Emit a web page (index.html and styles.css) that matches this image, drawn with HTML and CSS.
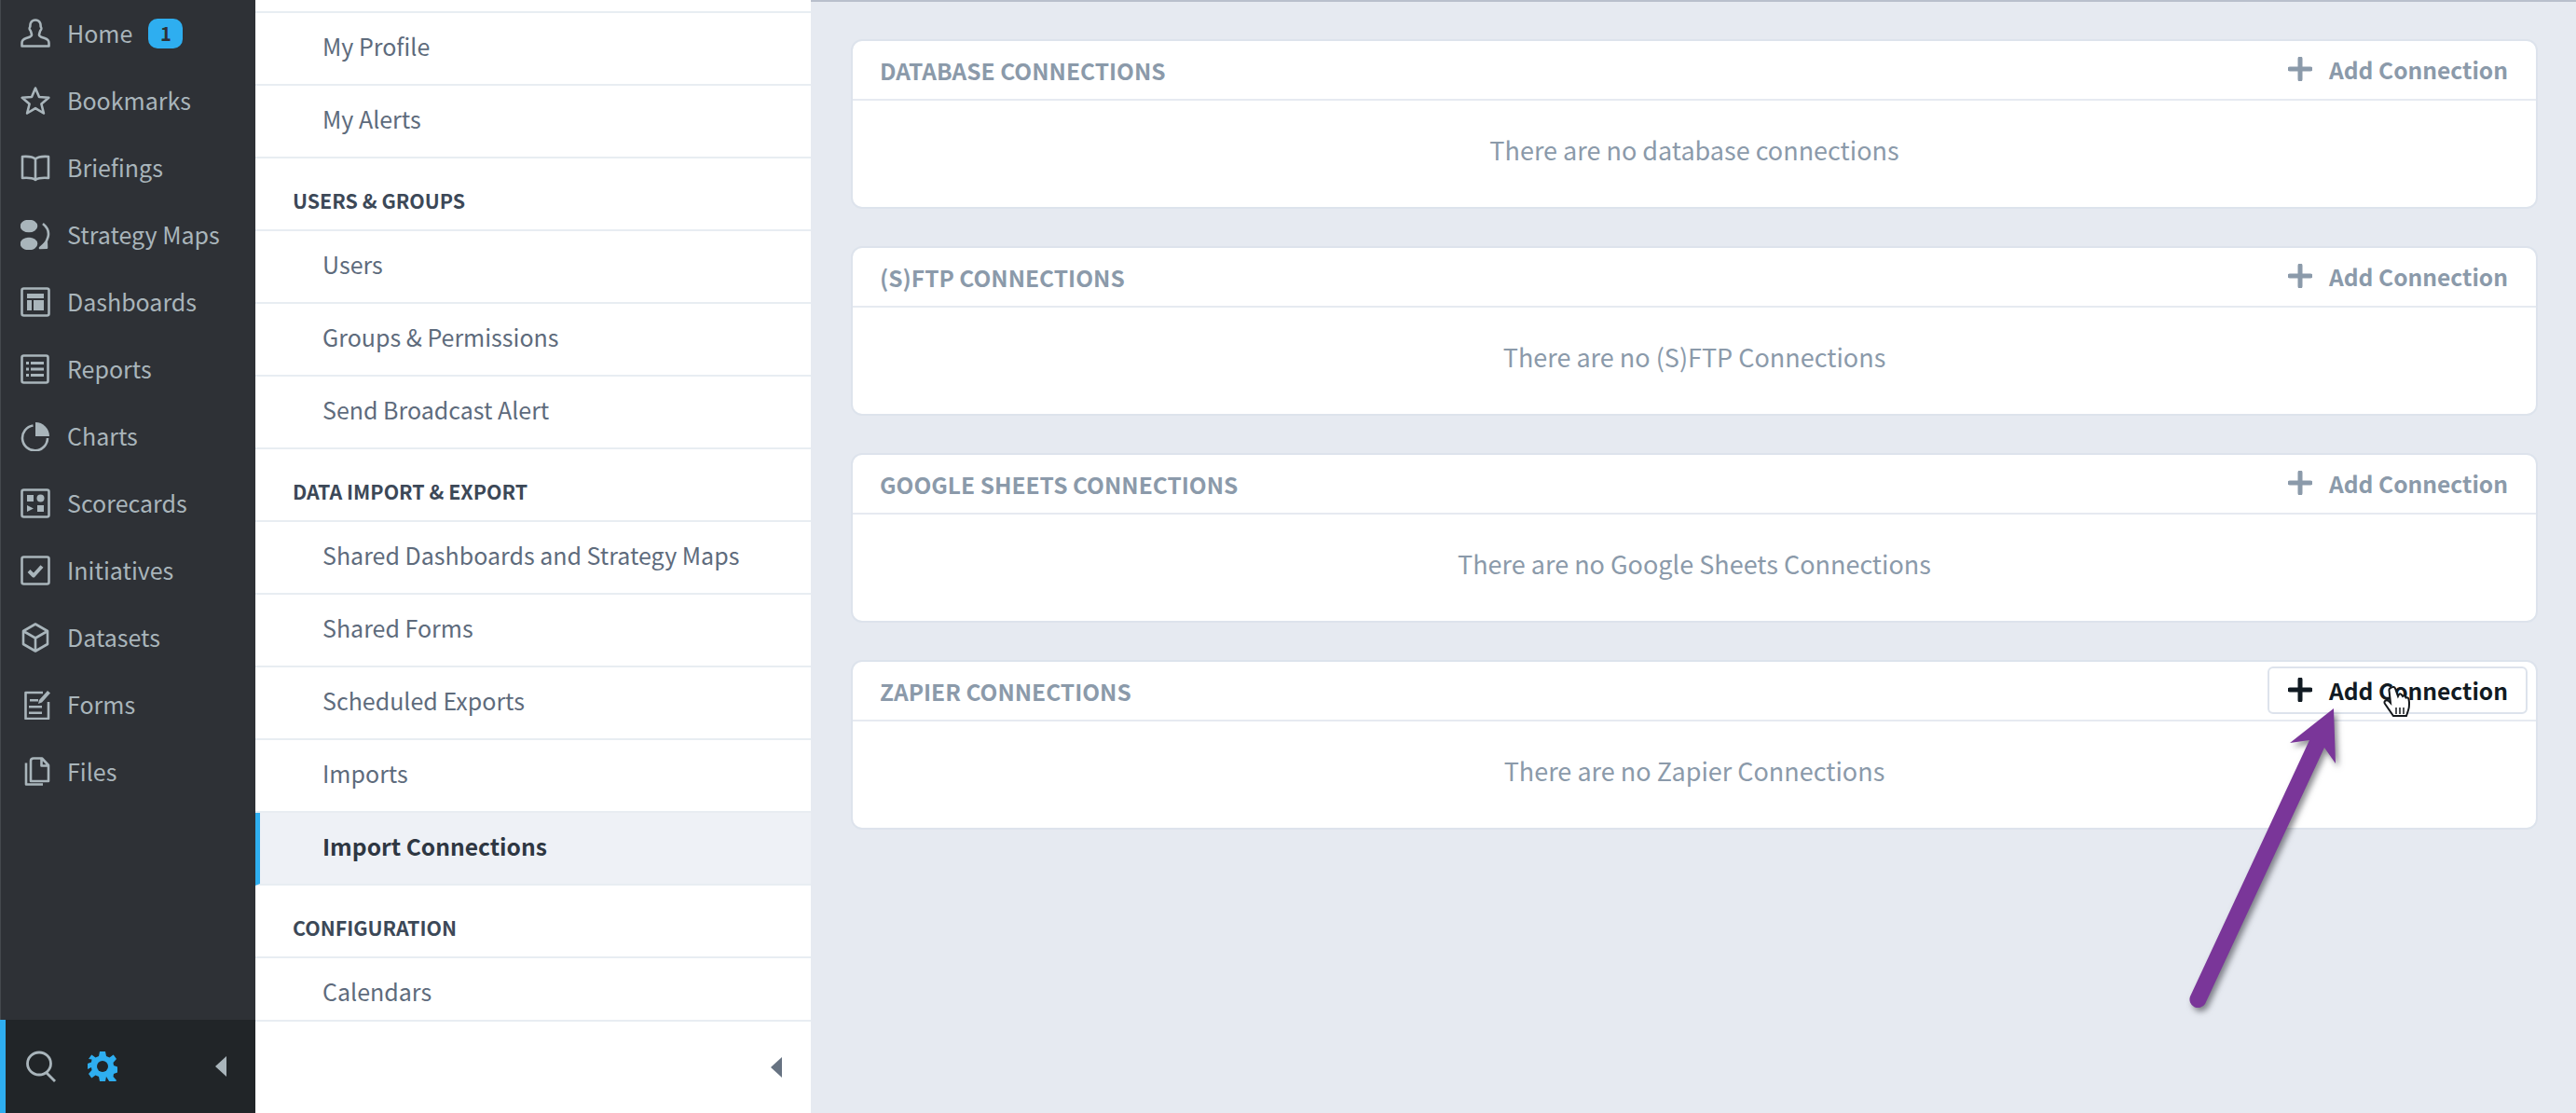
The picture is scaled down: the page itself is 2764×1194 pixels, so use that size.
FILE: index.html
```html
<!DOCTYPE html>
<html lang="en">
<head>
<meta charset="utf-8">
<title>Import Connections</title>
<link rel="stylesheet" href="styles.css">
</head>
<body>
<div class="app">
  <aside class="rail">
    <nav class="rail-nav">
      <a class="rail-item"><svg class="ri" viewBox="0 0 32 32"><path d="M11 4.500c1-2 3-3 5-3s4 1 5 3c.8 1.600.5 3 .7 4 .2 1 .9 1 .6 2.500-.3 1.300-1 1.500-1.300 2.500-.4 1.500-1 3-1 4 0 2 3 2.500 6 3.500 3 1 4.500 2.500 4.500 5v3.500H1.500V26c0-2.500 1.500-4 4.500-5s6-1.500 6-3.500c0-1-.6-2.500-1-4-.3-1-1-1.200-1.300-2.500-.3-1.500.4-1.500.6-2.500.2-1-.1-2.400.7-4z"/></svg><span>Home</span><b class="badge">1</b></a>
      <a class="rail-item"><svg class="ri" viewBox="0 0 32 32"><path d="M16 2.500l4 9.500 10.300.8-7.900 6.700 2.500 10-8.900-5.400-8.900 5.400 2.500-10-7.900-6.700L12 12z"/></svg><span>Bookmarks</span></a>
      <a class="rail-item"><svg class="ri" viewBox="0 0 32 32"><path d="M16 6.500C13 4 8 3.500 2 4v23c6-.5 11 0 14 2 3-2 8-2.500 14-2V4c-6-.5-11 0-14 2.500zM16 6.500V29"/></svg><span>Briefings</span></a>
      <a class="rail-item"><svg class="ri" viewBox="0 0 32 32"><ellipse class="fill" cx="9" cy="6.500" rx="8" ry="5.500"/><ellipse class="fill" cx="9" cy="25.500" rx="8" ry="5.500"/><path d="M24 4c5 4 6 8 6 11 0 4-2 8-5 12"/><path class="fill" d="M21 30l7-.2-.2-6z"/></svg><span>Strategy Maps</span></a>
      <a class="rail-item"><svg class="ri" viewBox="0 0 32 32"><rect x="1.500" y="1.500" width="29" height="29" rx="2"/><path class="fill nost" d="M7 7h18v5H7zM7 14h5v11H7zM14 14h11v11H14z"/></svg><span>Dashboards</span></a>
      <a class="rail-item"><svg class="ri" viewBox="0 0 32 32"><rect x="1.500" y="1.500" width="28" height="29" rx="2"/><path class="fill nost" d="M6 8h3v3H6zM11 8h14v3H11zM6 14.500h3v3H6zM11 14.500h14v3H11zM6 21h3v3H6zM11 21h14v3H11z"/></svg><span>Reports</span></a>
      <a class="rail-item"><svg class="ri" viewBox="0 0 32 32"><path d="M13.500 4.500A13.500 13.500 0 1 0 29 18"/><path class="fill nost" d="M16 1a15 15 0 0 1 15 15H16z"/></svg><span>Charts</span></a>
      <a class="rail-item"><svg class="ri" viewBox="0 0 32 32"><rect x="1.500" y="1.500" width="29" height="29" rx="2"/><path class="fill nost" d="M7 7h7v7H7zM18 18h7v7h-7zM7 18l7 3.500L7 25z"/><circle class="fill nost" cx="21.500" cy="10.500" r="4"/></svg><span>Scorecards</span></a>
      <a class="rail-item"><svg class="ri" viewBox="0 0 32 32"><rect x="1.500" y="1.500" width="29" height="29" rx="2"/><path class="thick" d="M9 16.500l5 5 9-10"/></svg><span>Initiatives</span></a>
      <a class="rail-item"><svg class="ri" viewBox="0 0 32 32"><path d="M16 1.500l13 7.500v14l-13 7.500L3 23V9zM3 9l13 7.500L29 9M16 16.500v14"/></svg><span>Datasets</span></a>
      <a class="rail-item"><svg class="ri" viewBox="0 0 32 32"><path d="M24 3H5.500v28H30V13"/><path class="fill nost" d="M29 1l3 2.500-9 10-4 1.500 1-4zM10 10h9v2.500h-9zM9 17h14v2.500H9zM9 23.500h14V26H9z"/></svg><span>Forms</span></a>
      <a class="rail-item"><svg class="ri" viewBox="0 0 32 32"><path d="M14 1.500h9l7 7.500v17H11V4.500c0-2 1-3 3-3zM22.500 2v7.500H30"/><path d="M6 6.500v23h18"/></svg><span>Files</span></a>
    </nav>
    <div class="rail-foot">
      <svg class="foot-search" viewBox="0 0 32 32"><ellipse cx="14" cy="13" rx="12.500" ry="12"/><path d="M22 23l9 9"/></svg>
      <svg class="foot-gear" viewBox="0 0 32 32"><path d="M13 0h6l1 5 3.500 1.500 4.200-3 3.300 4.500-3.500 4 .5 3 4 1.500v6l-4 1.500-.5 3 3.500 4-3.300 4.500-4.200-3L20 27l-1 5h-6l-1-5-3.500-1.500-4.200 3L1 24l3.500-4-.5-3L0 19v-6l4-1.500.5-3L1 8l3.300-4.500 4.200 3L12 5z"/><circle cx="16" cy="16" r="6" class="hole"/></svg>
      <i class="caret caret-rail"></i>
    </div>
  </aside>

  <aside class="menu">
    <div class="menu-scroll">
      <a class="m-row">My Profile</a>
      <a class="m-row">My Alerts</a>
      <h4 class="m-head">USERS &amp; GROUPS</h4>
      <a class="m-row">Users</a>
      <a class="m-row">Groups &amp; Permissions</a>
      <a class="m-row">Send Broadcast Alert</a>
      <h4 class="m-head">DATA IMPORT &amp; EXPORT</h4>
      <a class="m-row">Shared Dashboards and Strategy Maps</a>
      <a class="m-row">Shared Forms</a>
      <a class="m-row">Scheduled Exports</a>
      <a class="m-row">Imports</a>
      <a class="m-row active">Import Connections</a>
      <h4 class="m-head">CONFIGURATION</h4>
      <a class="m-row">Calendars</a>
    </div>
    <div class="menu-foot"><i class="caret caret-menu"></i></div>
  </aside>

  <main class="main">
    <section class="card">
      <header class="card-head"><h3>DATABASE CONNECTIONS</h3><a class="add"><svg class="plus" viewBox="0 0 26 26"><path d="M13 2v22M2 13h22"/></svg>Add Connection</a></header>
      <p class="card-body">There are no database connections</p>
    </section>
    <section class="card">
      <header class="card-head"><h3>(S)FTP CONNECTIONS</h3><a class="add"><svg class="plus" viewBox="0 0 26 26"><path d="M13 2v22M2 13h22"/></svg>Add Connection</a></header>
      <p class="card-body">There are no (S)FTP Connections</p>
    </section>
    <section class="card">
      <header class="card-head"><h3>GOOGLE SHEETS CONNECTIONS</h3><a class="add"><svg class="plus" viewBox="0 0 26 26"><path d="M13 2v22M2 13h22"/></svg>Add Connection</a></header>
      <p class="card-body">There are no Google Sheets Connections</p>
    </section>
    <section class="card">
      <header class="card-head"><h3>ZAPIER CONNECTIONS</h3><a class="add hover"><svg class="plus" viewBox="0 0 26 26"><path d="M13 2v22M2 13h22"/></svg>Add Connection</a></header>
      <p class="card-body">There are no Zapier Connections</p>
    </section>
  </main>
</div>

<svg class="arrow" viewBox="0 0 200 360" aria-hidden="true">
  <path d="M174 6L176 65 164 48 36 323A9 9 0 0 1 20 315L148 40 127 43z"/>
</svg>
<svg class="cursor" viewBox="0 0 32 36" aria-hidden="true">
  <path d="M11 2.500c1.500-1 3.500-.5 4 1l3 8.500 1-2c1-1 2.500-.8 3 .5l1 1.500c1-1 2.500-.8 3 .5l.5 1c1-.5 2.500 0 3 1.500.8 4 .5 9-.5 12l-2 6H13L4 20c-1-1.500-.5-3 1-3.500 1.500-.5 3 .3 5 2.500L8.500 6c-.3-1.500 1-3 2.500-3.500z"/>
  <path class="slits" d="M16 24v7M20 24v7M24 24v7"/>
</svg>
</body>
</html>
```
FILE: styles.css
```css
* { box-sizing: border-box; }
html, body { margin: 0; height: 100%; overflow: hidden; }
body {
  position: relative;
  width: 2764px;
  height: 1194px;
  font-family: "Noto Sans CJK SC", "Noto Sans", sans-serif;
  background: #e6eaf1;
}
a { display: flex; align-items: center; }
.app { display: flex; height: 1194px; border-top: 2px solid #b9bfcc; }

.rail { width: 274px; flex: none; display: flex; flex-direction: column; margin-top: -2px; background: #2e3136; border-left: 1px solid #44484d; }
.rail-nav { flex: 1; }
.rail-item { height: 72px; padding-left: 21px; color: #a9b5bb; font-size: 25px; line-height: 32px; }
.rail-item span { margin-left: 18px; padding-bottom: 2px; }
.ri { width: 32px; height: 32px; flex: none; fill: none; stroke: #a9b5bb; stroke-width: 2.6; stroke-linejoin: round; }
.ri .fill { fill: #a9b5bb; }
.ri .nost { stroke: none; }
.ri .thick { stroke-width: 4; }
.badge { margin-left: 17px; width: 37px; height: 32px; border-radius: 10px; background: #2eaef0; color: #2e3136; font-size: 20px; font-weight: 700; line-height: 31px; text-align: center; }

.rail-foot { height: 100px; flex: none; display: flex; align-items: center; padding-left: 22px; background: #212528; border-left: 6px solid #2eaef0; margin-left: -1px; }
.foot-search { width: 32px; height: 32px; flex: none; fill: none; stroke: #a9b5bb; stroke-width: 2.8; overflow: visible; }
.foot-gear { width: 32px; height: 32px; flex: none; margin-left: 34px; fill: #2eaef0; }
.foot-gear .hole { fill: #212528; }
.caret { display: block; flex: none; width: 0; height: 0; border-top: 11px solid transparent; border-bottom: 11px solid transparent; border-right-width: 12px; border-right-style: solid; }
.caret-rail { border-right-color: #a9b5bb; margin-left: 105px; }
.caret-menu { border-right-color: #677382; }

.menu { width: 596px; flex: none; display: flex; flex-direction: column; margin-top: -2px; background: #fff; }
.menu-scroll { flex: 1; padding-top: 12px; overflow: hidden; }
.menu-scroll::before { content: ""; display: block; height: 2px; background: #e8edf2; }
.m-row { height: 78px; padding: 0 0 7px 72px; border-bottom: 2px solid #e8edf2; color: #5e6b7c; font-size: 25px; }
.m-row.active { background: #eef1f6; color: #2e3742; font-size: 24.6px; font-weight: 700; border-left: 5px solid #2eaef0; padding-left: 67px; }
.m-head { display: flex; align-items: flex-end; height: 78px; margin: 0; padding: 0 0 19px 40px; border-bottom: 2px solid #e8edf2; color: #3c4857; font-size: 21.4px; line-height: 24px; font-weight: 700; }
.menu-foot { height: 100px; flex: none; display: flex; align-items: center; justify-content: flex-end; padding-right: 31px; border-top: 2px solid #e8edf2; }

.main { flex: 1; padding: 40px 41px 0 43px; display: flex; flex-direction: column; gap: 40px; min-width: 0; }
.card { height: 182px; background: #fff; border: 2px solid #dde3ec; border-radius: 12px; }
.card-head { height: 64px; display: flex; align-items: center; justify-content: space-between; padding: 0 9px 0 29px; border-bottom: 2px solid #e6eaf1; }
.card-head h3 { margin: 2px 0 0; font-size: 24.5px; font-weight: 700; color: #8b9aaa; line-height: 30px; }
.add { width: 279px; height: 51px; margin-top: -2px; padding-left: 20px; border: 2px solid transparent; border-radius: 6px; color: #8b9aaa; font-size: 24.6px; font-weight: 700; }
.add.hover { border-color: #dde3ec; color: #111a22; }
.plus { width: 26px; height: 26px; margin-right: 18px; flex: none; fill: none; stroke: #8b9aaa; stroke-width: 5; stroke-linecap: round; }
.add.hover .plus { stroke: #111a22; }
.card-body { margin: 0; height: 114px; padding-bottom: 9px; display: flex; align-items: center; justify-content: center; color: #8b9aaa; font-size: 27px; }

.arrow { position: absolute; left: 2330px; top: 754px; width: 200px; height: 360px; overflow: visible; fill: #7a3699; filter: drop-shadow(3px 4px 3px rgba(40, 40, 50, .55)); }
.cursor { position: absolute; left: 2555px; top: 735px; width: 32px; height: 36px; fill: #fff; stroke: #14181c; stroke-width: 2; }
.cursor .slits { fill: none; stroke-width: 1.500; }
```
